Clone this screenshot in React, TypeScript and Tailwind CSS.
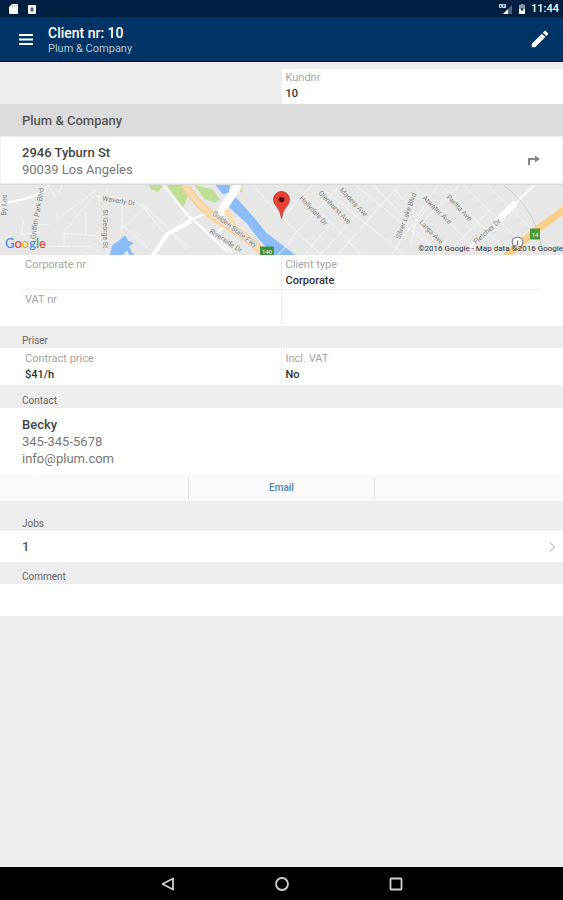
import React from 'react';
import { MdEdit } from 'react-icons/md';

interface FieldProps {
    label: string;
    value?: string;
    className?: string;
}

const Field: React.FC<FieldProps> = ({ label, value, className = '' }) => (
    <div className={`text-[11px] leading-4 ${className}`}>
        <dt className="text-[#a6a6a6]">{label}</dt>
        <dd className="min-h-4 font-medium text-[#333333]">{value}</dd>
    </div>
);

const SectionTitle: React.FC<{ children: React.ReactNode; className?: string }> = ({ children, className = '' }) => (
    <h2 className={`flex items-end bg-[#eeeeee] px-[22px] text-[10px] leading-[15px] text-[#666666] ${className}`}>
        {children}
    </h2>
);

const StatusBar = () => (
    <div className="flex h-[17px] items-center justify-between bg-[#001e40] pr-1 pl-[9px] text-white">
        <div className="flex items-center gap-[10px] pt-px">
            <svg className="h-[10px] w-[9px]" viewBox="0 0 9 10">
                <path d="M3 0h5q1 0 1 1v8q0 1-1 1H1q-1 0-1-1V3z" fill="#fff" />
                <path d="M3.500 1v2M5.500 1v2M7.500 1v2" stroke="#aab4c0" strokeWidth=".8" />
            </svg>
            <svg className="h-[9px] w-2" viewBox="0 0 8 9">
                <rect width="8" height="9" rx="1" fill="#fff" />
                <rect x="2.500" y="2.500" width="3" height="4" fill="#52647c" />
            </svg>
        </div>
        <div className="flex items-center gap-1 pt-px">
            <svg className="h-3 w-[14px]" viewBox="0 0 14 12">
                <path d="M13 2v9H4z" fill="#52647c" />
                <path d="M9 6v5H4z" fill="#fff" />
                <rect width="7" height="4" y="1" fill="#c5ccd5" />
                <path d="M1.500 2v2h1.500M4.500 2v2M4.500 2h1.500" fill="none" stroke="#001e40" strokeWidth=".7" />
            </svg>
            <svg className="mx-px h-[10px] w-2" viewBox="0 0 8 10">
                <path d="M2.500 0h3v1H7v9H1V1h1.500z" fill="#8b98a8" />
                <path d="M1 5h6v5H1z" fill="#fff" />
                <circle cx="4" cy="5.500" r="1.200" fill="#001e40" />
            </svg>
            <span className="text-[11px] leading-4 font-medium">11:44</span>
        </div>
    </div>
);

const streetLabels = [
    { text: 'By Los', x: 6, y: 31, angle: -88 },
    { text: 'Griffith Park Blvd', x: 35, y: 55, angle: -80 },
    { text: 'Waverly Dr', x: 102, y: 16, angle: 9 },
    { text: 'St George St', x: 103, y: 25, angle: 90 },
    { text: 'Golden State Fwy', x: 212, y: 30, angle: 38 },
    { text: 'Riverside Dr', x: 209, y: 48, angle: 33 },
    { text: 'Hollydale Dr', x: 299, y: 14, angle: 47 },
    { text: 'Glenhurst Ave', x: 318, y: 9, angle: 46 },
    { text: 'Madera Ave', x: 339, y: 6, angle: 46 },
    { text: 'Silver Lake Blvd', x: 400, y: 55, angle: -70 },
    { text: 'Atwater Ave', x: 422, y: 14, angle: 44 },
    { text: 'Perlita Ave', x: 446, y: 13, angle: 46 },
    { text: 'Larga Ave', x: 419, y: 38, angle: 46 },
    { text: 'Fletcher Dr', x: 476, y: 60, angle: -42 },
];

const ClientMap = () => (
    <div className="relative h-[71px] overflow-hidden border-t border-[#d8d8d8] bg-[#e7e7e7]">
        <svg
            className="h-full w-full"
            viewBox="0 0 563 71"
            preserveAspectRatio="xMidYMid slice"
            role="img"
            aria-label="Map"
        >
            {/* parks */}
            <path d="M148 0h16l-6 7-7-2zM166 0h17l6 10-6 13z" fill="#bfe094" />
            <path d="M194 0l19 5 7 10-5 3-10-3zM239 0h4l-1 8-6-2z" fill="#bfe094" />
            {/* water */}
            <path d="M110 71l2-10 7-5 6-5 3 5 6 3-5 3 3 6 3 3h-5l-3-5-5 5z" fill="#8cbcf8" />
            <path d="M215 0h15l-1 8-6 2zM231 8q18 18 35 40l30 23h-21q-16-14-28-32L226 20z" fill="#8cbcf8" />
            {/* minor roads */}
            <g fill="none" stroke="#f6f6f6" strokeWidth="1">
                <path d="M50 4l5 8M62 0l-3 9M96 6L58 34l-2-6M96 9L64 47v13M64 49l30 2M86 27v24M122 20v26M146 22l-24 21M122 40l30 27M97 12l18 0 30 10 42 40" />
                <path d="M24 35l-3 15 18-2M20 62h70l12 6M90 66l-5 5M35 40h14M98 10l2 10M108 4l-4 11M95 50l12 14v7M143 22l20 25M168 45l18 20M180 37l12-12" />
                <path d="M253 0l29 34 30-34M236 7l8 8M282 33l40 38M300 6l62 65M325 6l80 65M356 1l86 70M289 56l48-52M277 71l18-18M320 71l35-39M337 71l40-46 22-24M304 71l26-31" />
                <path d="M373 0l66 70M390 0l64 71M415 1l64 68M440 0l60 60M463 0l65 65M487 0l52 52M410 61l7-28L438 0M460 0l-40 40M392 71l10-18 28-32M453 63l38-39M506 33l-40 38" />
            </g>
            {/* main roads */}
            <path d="M0 20l26-6 17-6L49 0M163 0l28 35-24 14-15 22M191 35l20-8M225 41l-10 9 17 18M190 32l38 36" fill="none" stroke="#fff" strokeWidth="2" />
            <path d="M153 71l14-21 24-13" fill="none" stroke="#fff" strokeWidth="4" />
            <path d="M239 0l-20 30" stroke="#fff" strokeWidth="8" />
            <path d="M535 0l-33 32-36 34" fill="none" stroke="#fff" strokeWidth="2" />
            <path d="M516 18l-17 16" stroke="#fff" strokeWidth="6" />
            <path d="M503 0q24 18 34 44l7 27" fill="none" stroke="#cfcfcf" strokeWidth="1" />
            {/* freeways */}
            <path d="M184 0q18 27 42 40 26 16 40 31" fill="none" stroke="#f6cf98" strokeWidth="8" />
            <path d="M184 0q18 27 42 40 26 16 40 31M226 25l9 18" fill="none" stroke="#fadcae" strokeWidth="5" />
            <path d="M566 24l-33 24-28 25" fill="none" stroke="#f8cf8a" strokeWidth="7" />

            <g fontFamily="Roboto, sans-serif" fontSize="7" fill="#808080" stroke="#ececec" strokeWidth="1.200" paintOrder="stroke">
                {streetLabels.map(({ text, x, y, angle }) => (
                    <text key={text} x={x} y={y} transform={`rotate(${angle} ${x} ${y})`}>{text}</text>
                ))}
            </g>

            {/* exit signs and route shield */}
            <g fontFamily="Roboto, sans-serif" fontSize="6" fill="#fff" textAnchor="middle">
                <rect x="260" y="62" width="14" height="10" fill="#3c9140" />
                <text x="267" y="69">140</text>
                <rect x="530" y="44" width="10" height="11" fill="#4b9a3e" />
                <text x="535" y="52">14</text>
            </g>
            <path d="M513 54q5-3 9 0 3 7-4.500 11-7.500-4-4.500-11z" fill="#fff" stroke="#777777" />
            <path d="M517.500 56v5" stroke="#777777" />

            {/* marker */}
            <path d="M281.500 34q-1-8-5-12-3-3-3-7a8 8 0 0 1 16 0q0 4-3 7-4 4-5 12z" fill="#ea4335" stroke="#b9342b" strokeWidth=".8" />
            <circle cx="281.500" cy="15" r="2.800" fill="#401311" />
        </svg>
        <div className="absolute bottom-1 left-[5px] font-[Lato,sans-serif] text-[13px] leading-4 font-medium">
            <span className="text-[#4285f4]">G</span>
            <span className="text-[#ea4335]">o</span>
            <span className="text-[#f5b400]">o</span>
            <span className="text-[#4285f4]">g</span>
            <span className="text-[#34a853]">l</span>
            <span className="text-[#ea4335]">e</span>
        </div>
        <div className="absolute right-0 bottom-0 text-[8px] leading-3 text-[#333333]">
            ©2016 Google - Map data ©2016 Google
        </div>
    </div>
);

const NavBar = () => (
    <nav className="flex h-[33px] items-center justify-center gap-[98px] bg-black">
        <button aria-label="Back">
            <svg className="h-4 w-4" viewBox="0 0 16 16" fill="none" stroke="#d0d0d0" strokeWidth="1.800" strokeLinejoin="round">
                <path d="M13 2.500v11L2.500 8z" />
            </svg>
        </button>
        <button aria-label="Home">
            <svg className="h-4 w-4" viewBox="0 0 16 16" fill="none" stroke="#d0d0d0" strokeWidth="1.800">
                <circle cx="8" cy="8" r="6" />
            </svg>
        </button>
        <button aria-label="Recent apps">
            <svg className="h-4 w-4" viewBox="0 0 16 16" fill="none" stroke="#d0d0d0" strokeWidth="1.800">
                <rect x="2.500" y="2.500" width="11" height="11" rx="1" />
            </svg>
        </button>
    </nav>
);

const App: React.FC = () => {
    return (
        <div className="flex min-h-screen flex-col bg-[#eeeeee] font-[Roboto,sans-serif]">
            <StatusBar />
            <header className="flex h-[45px] items-center border-b border-[#000050] bg-[#003366] pr-3 pl-[18px] text-white">
                <button aria-label="Menu">
                    <svg className="h-4 w-4" viewBox="0 0 16 16" stroke="#fff" strokeWidth="2">
                        <path d="M1 4h14M1 8.500h14M1 13h14" />
                    </svg>
                </button>
                <div className="ml-[14px] flex-1 pt-1">
                    <h1 className="text-[14px] leading-4 font-medium">Client nr: 10</h1>
                    <p className="text-[11px] leading-4 text-[#b8c5d5]">Plum &amp; Company</p>
                </div>
                <button aria-label="Edit">
                    <MdEdit className="h-[22px] w-[22px]" />
                </button>
            </header>

            <main className="flex-1">
                <dl className="flex h-[42px] justify-end pt-[7px]">
                    <Field label="Kundnr" value="10" className="w-1/2 bg-white pt-px pl-1" />
                </dl>

                <h2 className="h-8 bg-[#dcdcdc] px-[22px] pt-px text-[13px] leading-8 font-medium text-[#555555]">Plum &amp; Company</h2>

                <div className="flex h-12 items-center justify-between border border-[#eeeeee] bg-white pr-[22px] pl-[21px] text-[13px] text-[#777777]">
                    <address className="pt-px leading-[17px] not-italic">
                        <p className="font-medium text-[#444444]">2946 Tyburn St</p>
                        <p>90039 Los Angeles</p>
                    </address>
                    <button aria-label="Directions">
                        <svg className="h-3 w-3" viewBox="0 0 12 12" fill="none" stroke="#858585" strokeWidth="2">
                            <path d="M1 11V5h7" />
                            <path d="M7 1.500L12 5 7 8.500z" fill="#858585" stroke="none" />
                        </svg>
                    </button>
                </div>

                <ClientMap />

                <dl className="bg-white">
                    <div className="mx-[22px] grid h-[35px] grid-cols-2 border-b border-[#eeeeee]">
                        <Field label="Corporate nr" className="border-r border-[#eeeeee] pt-[2px] pl-[3px]" />
                        <Field label="Client type" value="Corporate" className="pt-[2px] pl-1" />
                    </div>
                    <div className="mx-[22px] grid h-9 grid-cols-2">
                        <Field label="VAT nr" className="border-r border-[#eeeeee] pt-[2px] pl-[3px]" />
                    </div>
                </dl>

                <SectionTitle className="h-[22px]">Priser</SectionTitle>
                <dl className="bg-white">
                    <div className="mx-[22px] grid h-[37px] grid-cols-2">
                        <Field label="Contract price" value="$41/h" className="border-r border-[#eeeeee] pt-[3px] pl-[3px]" />
                        <Field label="Incl. VAT" value="No" className="pt-[3px] pl-1" />
                    </div>
                </dl>

                <SectionTitle className="h-[23px]">Contact</SectionTitle>
                <div className="h-[67px] bg-white px-[22px] pt-2 text-[13px] leading-[17px] text-[#777777]">
                    <p className="font-medium text-[#444444]">Becky</p>
                    <p>345-345-5678</p>
                    <p>info@plum.com</p>
                </div>
                <div className="grid h-[26px] grid-cols-3 bg-[#fafafa] py-[2px] text-center text-[10px] leading-[22px]">
                    <span />
                    <a href="mailto:info@plum.com" className="border-x border-[#e5e5e5] font-medium text-[#5580b8]">Email</a>
                    <span />
                </div>

                <SectionTitle className="h-[30px]">Jobs</SectionTitle>
                <button className="flex h-[31px] w-full items-center justify-between bg-white pr-[7px] pl-[22px] text-[13px] font-medium text-[#555555]">
                    1
                    <svg className="h-3 w-2" viewBox="0 0 8 12" fill="none" stroke="#c8c8c8" strokeWidth="1.300">
                        <path d="M1.500 1.500L6.500 6l-5 4.500" />
                    </svg>
                </button>

                <SectionTitle className="h-[22px]">Comment</SectionTitle>
                <div className="h-8 bg-white" />
            </main>

            <NavBar />
        </div>
    );
};

export default App;
